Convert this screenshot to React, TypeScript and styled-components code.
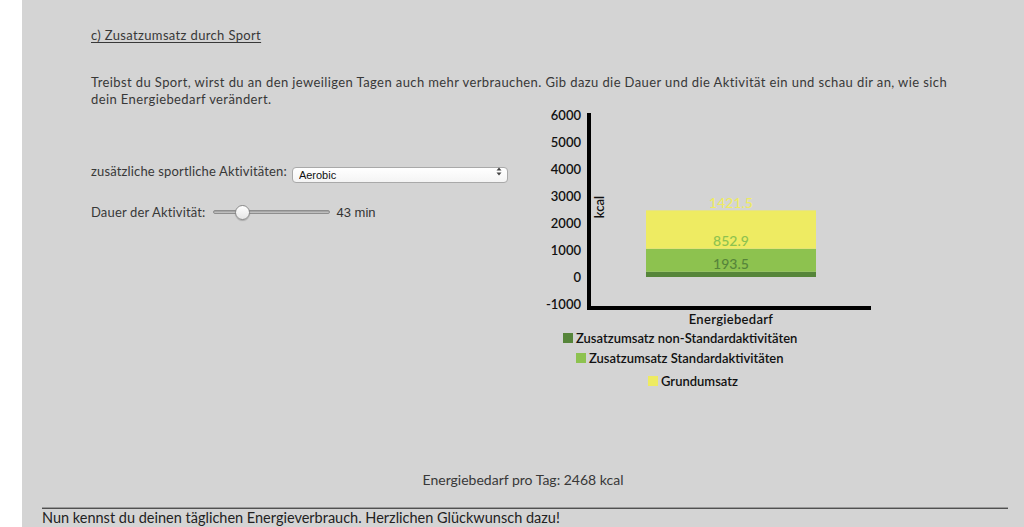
import React from "react";
import styled, { createGlobalStyle } from "styled-components";

const GlobalStyle = createGlobalStyle`
  html, body {
    margin: 0;
    padding: 0;
    background: #ffffff;
    overflow: hidden;
  }
`;

type Segment = {
  label: string;
  value: number;
  color: string;
};

const segments: Segment[] = [
  { label: "Zusatzumsatz non-Standardaktivitäten", value: 193.5, color: "#56853a" },
  { label: "Zusatzumsatz Standardaktivitäten", value: 852.9, color: "#8dc24f" },
  { label: "Grundumsatz", value: 1421.5, color: "#eeeb62" },
];

const legendIndent = [23, 36, 108];
const legendGap = [0, 4, 7];

const ticks = [6000, 5000, 4000, 3000, 2000, 1000, 0, -1000];

// chart geometry (svg units == px)
const ZERO = 169;
const SCALE = 0.027;
const BAR_X = 106;
const BAR_W = 170;
const y = (v: number) => ZERO - v * SCALE;

const Chart: React.FC = () => {
  let acc = 0;
  const rects = segments.map((s) => {
    const bottom = acc;
    acc += s.value;
    return { ...s, top: acc, bottom };
  });

  return (
    <ChartSvg width={340} height={222} viewBox="0 0 340 222">
      {ticks.map((t) => (
        <TickLabel key={t} x={41} y={y(t) + 4.6} textAnchor="end">
          {t}
        </TickLabel>
      ))}
      <rect x={47} y={5} width={4} height={197} fill="#000" />
      <rect x={50} y={198} width={281} height={4} fill="#000" />
      <AxisLabel transform={`translate(64 ${99}) rotate(-90)`} textAnchor="middle">
        kcal
      </AxisLabel>
      {rects.map((r) => (
        <rect
          key={r.label}
          x={BAR_X}
          y={y(r.top)}
          width={BAR_W}
          height={y(r.bottom) - y(r.top)}
          fill={r.color}
        />
      ))}
      {rects.map((r) => (
        <ValueLabel
          key={r.label + "-v"}
          x={BAR_X + BAR_W / 2}
          y={y(r.top) - 2.5}
          textAnchor="middle"
          fill={r.color}
        >
          {r.value.toFixed(1)}
        </ValueLabel>
      ))}
      <AxisLabel x={BAR_X + BAR_W / 2} y={216} textAnchor="middle" letterSpacing={0.3}>
        Energiebedarf
      </AxisLabel>
    </ChartSvg>
  );
};

export default function App() {
  const [duration, setDuration] = React.useState(43);
  const total = Math.round(segments.reduce((s, x) => s + x.value, 0));

  return (
    <>
      <GlobalStyle />
      <Panel>
        <Content>
          <Title>c) Zusatzumsatz durch Sport</Title>
          <Intro>
            Treibst du Sport, wirst du an den jeweiligen Tagen auch mehr verbrauchen. Gib dazu die Dauer und die
            Aktivität ein und schau dir an, wie sich dein Energiebedarf verändert.
          </Intro>
          <Main>
            <Controls>
              <ControlRow>
                <Label>zusätzliche sportliche Aktivitäten:</Label>
                <SelectWrap>
                  <Select defaultValue="aerobic">
                    <option value="aerobic">Aerobic</option>
                    <option value="joggen">Joggen</option>
                    <option value="radfahren">Radfahren</option>
                    <option value="schwimmen">Schwimmen</option>
                  </Select>
                  <SelectArrows width="6" height="9" viewBox="0 0 6 9">
                    <path d="M3 0.5 L5.5 3.5 H0.5 Z M3 8.5 L5.5 5.5 H0.5 Z" fill="#444" />
                  </SelectArrows>
                </SelectWrap>
              </ControlRow>
              <ControlRow $gap={25}>
                <Label>Dauer der Aktivität:</Label>
                <Range
                  type="range"
                  min={0}
                  max={200}
                  value={duration}
                  onChange={(e) => setDuration(Number(e.target.value))}
                />
                <RangeValue>{duration} min</RangeValue>
              </ControlRow>
            </Controls>
            <ChartColumn>
              <Chart />
              <Legend>
                {segments.map((s, i) => (
                  <LegendItem key={s.label} $indent={legendIndent[i]} $gap={legendGap[i]}>
                    <Swatch $color={s.color} />
                    {s.label}
                  </LegendItem>
                ))}
              </Legend>
            </ChartColumn>
          </Main>
        </Content>
        <Summary>Energiebedarf pro Tag: {total} kcal</Summary>
        <Rule />
        <Closing>Nun kennst du deinen täglichen Energieverbrauch. Herzlichen Glückwunsch dazu!</Closing>
      </Panel>
    </>
  );
}

const Panel = styled.div`
  margin-left: 22px;
  min-height: 527px;
  background: #d4d4d4;
  padding-top: 27px;
  box-sizing: border-box;
  font-family: Lato, "Open Sans", sans-serif;
  color: #383838;
`;

const Content = styled.div`
  padding: 0 69px;
`;

const Title = styled.h3`
  margin: 0;
  font-size: 13px;
  line-height: 17px;
  font-weight: 400;
  letter-spacing: 0.35px;
  text-decoration: underline;
  text-underline-offset: 2px;
`;

const Intro = styled.p`
  margin: 30px 0 0;
  font-size: 13px;
  line-height: 17px;
  letter-spacing: 0.4px;
`;

const Main = styled.div`
  display: flex;
  align-items: flex-start;
`;

const Controls = styled.div`
  width: 449px;
  padding-top: 55px;
`;

const ControlRow = styled.div<{ $gap?: number }>`
  display: flex;
  align-items: center;
  margin-top: ${(p) => p.$gap ?? 0}px;
  height: 16px;
`;

const Label = styled.span`
  font-size: 13px;
  line-height: 16px;
  letter-spacing: 0.15px;
  margin-right: 5px;
`;

const SelectWrap = styled.div`
  position: relative;
  width: 216px;
  height: 16px;
`;

const Select = styled.select`
  appearance: none;
  width: 100%;
  height: 16px;
  margin: 0;
  padding: 0 0 0 6px;
  box-sizing: border-box;
  border: 1px solid #a9a9a9;
  border-radius: 4px;
  background: linear-gradient(#ffffff, #f4f4f4);
  font-family: "Liberation Sans", Arial, sans-serif;
  font-size: 11px;
  color: #111;
  outline: none;
`;

const SelectArrows = styled.svg`
  position: absolute;
  right: 6px;
  top: 3.5px;
  pointer-events: none;
`;

const Range = styled.input`
  appearance: none;
  -webkit-appearance: none;
  width: 117px;
  height: 16px;
  margin: 0 7px 0 2px;
  background: transparent;

  &::-webkit-slider-runnable-track {
    height: 4px;
    border-radius: 2px;
    background: linear-gradient(#9a9a9a, #c9c9c9);
    border: 1px solid #8e8e8e;
    box-sizing: border-box;
  }

  &::-webkit-slider-thumb {
    -webkit-appearance: none;
    width: 15px;
    height: 15px;
    margin-top: -6.5px;
    border-radius: 50%;
    border: 1px solid #8a8a8a;
    background: linear-gradient(#ffffff, #e6e6e6);
    box-shadow: 0 1px 1px rgba(0, 0, 0, 0.2);
    box-sizing: border-box;
  }
`;

const RangeValue = styled.span`
  font-family: "Liberation Sans", Arial, sans-serif;
  font-size: 13px;
  color: #333;
`;

const ChartColumn = styled.div`
  display: flex;
  flex-direction: column;
`;

const ChartSvg = styled.svg`
  display: block;
  overflow: visible;
  font-family: Lato, "Open Sans", sans-serif;
`;

const TickLabel = styled.text`
  font-size: 13px;
  font-weight: 600;
  fill: #111;
`;

const AxisLabel = styled.text`
  font-size: 13px;
  font-weight: 600;
  fill: #111;
`;

const ValueLabel = styled.text`
  font-size: 14px;
  font-weight: 500;
`;

const Legend = styled.div`
  display: flex;
  flex-direction: column;
`;

const LegendItem = styled.div<{ $indent: number; $gap: number }>`
  display: flex;
  align-items: center;
  margin-left: ${(p) => p.$indent}px;
  margin-top: ${(p) => p.$gap}px;
  font-size: 13px;
  line-height: 16px;
  font-weight: 600;
  color: #111;
`;

const Swatch = styled.span<{ $color: string }>`
  width: 10px;
  height: 10px;
  margin-right: 3px;
  background: ${(p) => p.$color};
`;

const Summary = styled.div`
  margin-top: 82px;
  text-align: center;
  font-size: 14px;
  line-height: 17px;
`;

const Rule = styled.hr`
  margin: 19px 16px 0 20px;
  height: 0;
  border: none;
  border-top: 1px solid #9a9a9a;
  border-bottom: 1px solid #505050;
`;

const Closing = styled.div`
  padding-left: 20px;
  font-size: 14.5px;
  line-height: 17px;
  color: #222;
`;
